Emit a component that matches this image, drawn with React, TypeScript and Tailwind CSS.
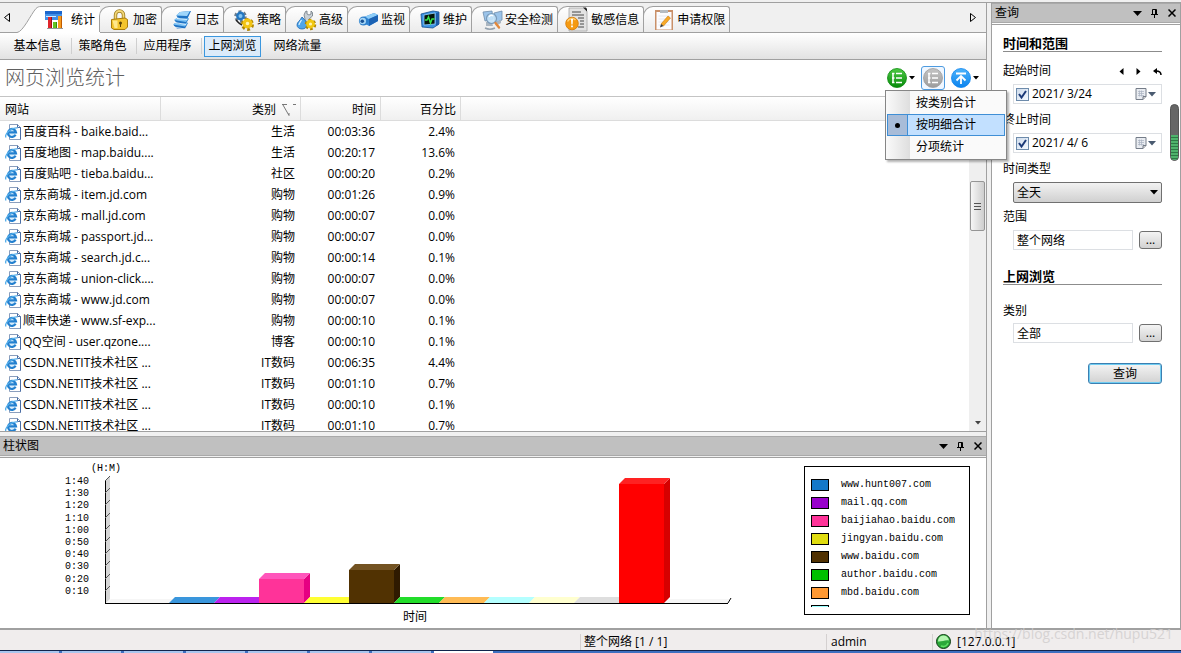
import { useState } from "react"
import type { ReactNode } from "react"
import clsx from "clsx"

const rows = [
  ["百度百科 - baike.baid...", "生活", "00:03:36", "2.4%"],
  ["百度地图 - map.baidu....", "生活", "00:20:17", "13.6%"],
  ["百度贴吧 - tieba.baidu...", "社区", "00:00:20", "0.2%"],
  ["京东商城 - item.jd.com", "购物", "00:01:26", "0.9%"],
  ["京东商城 - mall.jd.com", "购物", "00:00:07", "0.0%"],
  ["京东商城 - passport.jd...", "购物", "00:00:07", "0.0%"],
  ["京东商城 - search.jd.c...", "购物", "00:00:14", "0.1%"],
  ["京东商城 - union-click....", "购物", "00:00:07", "0.0%"],
  ["京东商城 - www.jd.com", "购物", "00:00:07", "0.0%"],
  ["顺丰快递 - www.sf-exp...", "购物", "00:00:10", "0.1%"],
  ["QQ空间 - user.qzone....", "博客", "00:00:10", "0.1%"],
  ["CSDN.NETIT技术社区 ...", "IT数码", "00:06:35", "4.4%"],
  ["CSDN.NETIT技术社区 ...", "IT数码", "00:01:10", "0.7%"],
  ["CSDN.NETIT技术社区 ...", "IT数码", "00:00:10", "0.1%"],
  ["CSDN.NETIT技术社区 ...", "IT数码", "00:01:10", "0.7%"],
]

const legend = [
  { name: "www.hunt007.com", color: "bg-[#1478c8]" },
  { name: "mail.qq.com", color: "bg-[#9900cc]" },
  { name: "baijiahao.baidu.com", color: "bg-[#ff3399]" },
  { name: "jingyan.baidu.com", color: "bg-[#e0dc10]" },
  { name: "www.baidu.com", color: "bg-[#513202]" },
  { name: "author.baidu.com", color: "bg-[#00c000]" },
  { name: "mbd.baidu.com", color: "bg-[#ff9933]" },
  { name: "", color: "bg-[#99ffff]" },
]

// h is the height of the front face, 0 means only the top face is visible
const bars = [
  { h: 0, front: "#1478c8", top: "#3a96dc", side: "#0c5a9a" },
  { h: 0, front: "#9900cc", top: "#bb22ee", side: "#770099" },
  { h: 24, front: "#ff3399", top: "#ff55bb", side: "#e60082" },
  { h: 0, front: "#e0dc10", top: "#ffff33", side: "#b0ac00" },
  { h: 33, front: "#513202", top: "#735322", side: "#2f1a00" },
  { h: 0, front: "#00c000", top: "#22dd2a", side: "#009000" },
  { h: 0, front: "#ff9933", top: "#ffbb55", side: "#dd7711" },
  { h: 0, front: "#99ffff", top: "#b4ffff", side: "#77dddd" },
  { h: 0, front: "#ffffcc", top: "#ffffcf", side: "#dddd99" },
  { h: 0, front: "#c0c0c0", top: "#dedede", side: "#a0a0a0" },
  { h: 119, front: "#ff0000", top: "#ff2222", side: "#d60000" },
]

const ticks = ["1:40", "1:30", "1:20", "1:10", "1:00", "0:50", "0:40", "0:30", "0:20", "0:10"]

/* ---------- icons ---------- */

function Svg({ children }: { children: ReactNode }) {
  return (
    <svg className="size-5 shrink-0 overflow-visible" viewBox="0 0 20 20" aria-hidden="true">
      {children}
    </svg>
  )
}

const StatIcon = () => (
  <Svg>
    <path d="M1 1h17v9H1z" fill="#3f8fe8" />
    <path d="M1 1h17v3H1z" fill="#1c66cc" />
    <path d="M2 6h10v1H2z" fill="#d4eaff" />
    <path d="M4 7h4v11H4z" fill="#e0252b" />
    <path d="M7 7h1v11H7z" fill="#a00d14" />
    <path d="M9 12h4v6H9z" fill="#62c422" />
    <path d="M12 12h1v6h-1z" fill="#3a8a0c" />
    <path d="M14 6h4v12h-4z" fill="#f79a1e" />
    <path d="M17 6h1v12h-1z" fill="#c05c00" />
    <path d="M3 18h16v1H3z" fill="#999" />
  </Svg>
)

const LockIcon = () => (
  <Svg>
    <path d="M5.500 10V5a4 4 0 0 1 8 0v5" fill="none" stroke="#9a7a1c" strokeWidth="3.400" />
    <path d="M5.500 10V5a4 4 0 0 1 8 0v5" fill="none" stroke="#f4d879" strokeWidth="1.800" />
    <path d="M1.500 9.500 15 8l2.500 1.500V17L15 19.500H4L1.500 18z" fill="#f3c42c" stroke="#a97c0c" />
    <path d="M2.500 10.500h5V18h-3z" fill="#ffe88c" />
    <circle cx="10.500" cy="13" r="1.500" fill="#5f4505" />
    <path d="M10 13h1v4h-1z" fill="#5f4505" />
  </Svg>
)

const LogIcon = () => (
  <Svg>
    <path d="m1 15 4-3.500 11 1.500-3 5.500H5z" fill="#1f73c4" />
    <path d="m1 14.500 4-3 11 1-3 4z" fill="#7cc2f4" />
    <path d="m2 10.500 4-3.500 11 1.500-3 5H6z" fill="#1f73c4" />
    <path d="m2 10 4-3 11 1-3 4z" fill="#7cc2f4" />
    <path d="m4 6 4-4 11-1-3.500 7.500H8z" fill="#1f73c4" />
    <path d="m4 5.500 4-3.500 10-1-3 5z" fill="#9fd6fb" />
    <path d="m1 14.500 1 2.500 11 2M2 10l1 2.500 11 2M4 5.500l1 3 10 1" fill="none" stroke="#fff" strokeWidth=".7" />
  </Svg>
)

const PolicyIcon = () => (
  <Svg>
    <circle cx="6.500" cy="6.500" r="3.800" fill="none" stroke="#6b7d8e" strokeWidth="5" strokeDasharray="2.200 1.780" />
    <circle cx="6.500" cy="6" r="3.200" fill="#84c4f0" stroke="#2477c0" strokeWidth="2.400" />
    <path d="M2 10c2 2 3 4 6 5" fill="none" stroke="#222" strokeWidth="1.500" />
    <circle cx="13.500" cy="14.500" r="4" fill="none" stroke="#b08600" strokeWidth="5" strokeDasharray="2.200 1.990" />
    <circle cx="13.500" cy="13.500" r="3.400" fill="#fff3b0" stroke="#f2c414" strokeWidth="3.200" />
  </Svg>
)

const AdvancedIcon = () => (
  <Svg>
    <path d="M9 9 8 5l1.500-3.500 1.500-.500v3l2 1 2-1V1l1.500 1.500V6L13 9v4H9z" fill="#c9d0d6" stroke="#6d7780" strokeWidth=".8" />
    <path d="M6 7c3 3 5 5 5 8a5 4 0 0 1-10 0c0-3 3-4 5-8z" fill="#4ea5ea" stroke="#1a65b3" strokeWidth=".8" />
    <path d="M5.500 10c-1 2-2.500 3-2.500 5" fill="none" stroke="#d9f0ff" strokeWidth="1.200" />
    <circle cx="14.500" cy="14.500" r="3.500" fill="none" stroke="#b08600" strokeWidth="4.500" strokeDasharray="2 1.660" />
    <circle cx="14.500" cy="14" r="3" fill="#fff3b0" stroke="#f2c80f" strokeWidth="2.800" />
  </Svg>
)

const MonitorIcon = () => (
  <Svg>
    <path d="m6 7 10-4 4 2v6l-9 5-5-3z" fill="#2f86d6" />
    <path d="m6 7 10-4 4 2-9 4z" fill="#8ecdf8" />
    <path d="m11 9 9-4v6l-9 5z" fill="#1b62b4" />
    <circle cx="5.500" cy="11" r="4.600" fill="#2e7fcb" />
    <circle cx="4.800" cy="11" r="3.200" fill="#a7d7f6" />
    <circle cx="4.300" cy="11.300" r="1.800" fill="#185195" />
  </Svg>
)

const MaintainIcon = () => (
  <Svg>
    <path d="m1 4 12-3 6 1v12l-6 4-11-1z" fill="#3b93e4" stroke="#174f8f" strokeWidth=".8" />
    <path d="M16 3v13l3-1.500V2z" fill="#1d5ca8" />
    <path d="m4 5 11-2v11L4 15z" fill="#04160a" stroke="#9cd2fb" strokeWidth=".8" />
    <path d="M5 10h2l1.500-3 2 6L12 9h2.500" fill="none" stroke="#37e24a" strokeWidth="1.500" />
  </Svg>
)

const SecurityIcon = () => (
  <Svg>
    <path d="m1 2 9-1 1 8-8 2zM12 3l8-2v9l-7 3z" fill="#9bc4ea" stroke="#6e8dab" strokeWidth=".8" />
    <path d="M4 12h6l1 4H4zM13 12l6-2v3l-5 3z" fill="#a9b5c0" />
    <circle cx="9.500" cy="8.500" r="5" fill="#c4e3f9" fillOpacity=".9" stroke="#7a9ab8" strokeWidth="1.200" />
    <path d="M7 7c1-2 3-2 4-1" fill="none" stroke="#fff" strokeWidth="1.200" />
    <path d="m13.500 13 3.500 4.500" stroke="#e2893d" strokeWidth="2.400" strokeLinecap="round" />
    <path d="M3 18c3 1.500 7 1.500 10 0" fill="none" stroke="#93a1ae" strokeWidth="1.500" />
  </Svg>
)

const SensitiveIcon = () => (
  <Svg>
    <path d="M1-2h15l3 3v20H1z" fill="#e3e3e3" stroke="#a6a6a6" strokeWidth=".8" />
    <path d="M15-2.500 19 1.500V-1l-1-1.500z" fill="#222" />
    <path d="M4 2h9M4 5h12M10 8h6M12 11h4M12 14h4M10 17h6" stroke="#7d7d7d" strokeWidth="1.500" />
    <circle cx="4" cy="13.500" r="6.300" fill="#f59a12" stroke="#d57700" strokeWidth=".8" />
    <path d="M-.500 11.500a5 5 0 0 1 8-1.500" fill="none" stroke="#ffd27a" strokeWidth="1.500" />
    <path d="M3 9h2l-.400 5.500H3.400zM3.100 15.500h1.800v1.800H3.100z" fill="#fff" />
  </Svg>
)

const ApplyIcon = () => (
  <Svg>
    <path d="M1 0h18v20H1z" fill="#c99069" />
    <path d="M2.500 2h15v17.500h-15z" fill="#fcfcff" />
    <path d="M6 0h8v3H6z" fill="#b6bcc2" />
    <path d="M4.500 6h11M4.500 9h11M4.500 12h11M4.500 15h11" stroke="#dfe3ea" strokeWidth=".8" />
    <path d="m7 14 7-8 2.500 2-7 8z" fill="#f9a927" stroke="#c77b0d" strokeWidth=".6" />
    <path d="m7 14-1 3.500 3.500-1.500z" fill="#3c3c3c" />
  </Svg>
)

function IeIcon() {
  return (
    <svg className="size-4 shrink-0" viewBox="0 0 16 16" aria-hidden="true">
      <path d="M4.500.5h8l3 3v12h-11z" fill="#fff" stroke="#8a9ebd" />
      <path d="M12.500.5v3h3v12" fill="none" stroke="#4a6da5" />
      <circle cx="7" cy="8.500" r="4" fill="#d7ecfb" />
      <path d="M10.600 10.800A4 4 0 1 1 11 8.400H4" fill="none" stroke="#2380cf" strokeWidth="2.200" />
      <path d="M1 13.500C-1 10 7 3 12.500 4" fill="none" stroke="#54aeea" strokeWidth="1.300" />
    </svg>
  )
}

function RoundIcon({ kind }: { kind: "green" | "gray" | "blue" }) {
  const light = { green: "#4cc943", gray: "#c4c4c4", blue: "#4db4fb" }[kind]
  const dark = { green: "#078a0b", gray: "#9c9c9c", blue: "#0b83ee" }[kind]
  return (
    <svg className="size-5" viewBox="0 0 20 20" aria-hidden="true">
      <defs>
        <linearGradient id={`round-${kind}`} x2="0" y2="1">
          <stop offset="0" stopColor={light} />
          <stop offset="1" stopColor={dark} />
        </linearGradient>
      </defs>
      <circle cx="10" cy="10" r="9.500" fill={`url(#round-${kind})`} stroke={dark} strokeWidth=".8" />
      {kind === "blue" ? (
        <path d="M5 5.500h10M10 16V8M5.500 12.500 10 8l4.500 4.500" fill="none" stroke="#fff" strokeWidth="1.800" />
      ) : (
        <path d="M6 5.500v9M9 5.500h6M9 10h6M9 14.500h6M5 5.500h2.500M5 10h2.500M5 14.500h2.500" fill="none" stroke="#fff" strokeWidth="1.500" />
      )}
    </svg>
  )
}

function SmallArrow() {
  return (
    <svg className="h-1 w-[6px] shrink-0" viewBox="0 0 6 4" aria-hidden="true">
      <path d="M0 0h6L3 3.500z" fill="currentColor" />
    </svg>
  )
}

function PanelTitle({ title }: { title: string }) {
  return (
    <div className="flex h-5 shrink-0 items-center border-y border-[#a9a9a9] bg-[#c0c0c0] pl-[3px]">
      <h2 className="flex-1">{title}</h2>
      <div className="flex items-center">
        <button type="button" aria-label="菜单" className="flex w-[17px] justify-center">
          <svg className="h-[5px] w-[9px]" viewBox="0 0 9 5"><path d="M0 0h9L4.500 5z" /></svg>
        </button>
        <button type="button" aria-label="固定" className="flex w-[17px] justify-center">
          <svg className="h-[9px] w-[7px]" viewBox="0 0 7 9">
            <path d="M1.500 5V.5h4V5M4.500 1v4M0 5.500h7M3.500 6v3" fill="none" stroke="#000" />
          </svg>
        </button>
        <button type="button" aria-label="关闭" className="flex w-[17px] justify-center">
          <svg className="size-2" viewBox="0 0 8 8"><path d="m.5.5 7 7m0-7-7 7" stroke="#000" strokeWidth="1.500" /></svg>
        </button>
      </div>
    </div>
  )
}

/* ---------- left side ---------- */

const tabs = [
  { name: "加密", icon: <LockIcon /> },
  { name: "日志", icon: <LogIcon /> },
  { name: "策略", icon: <PolicyIcon /> },
  { name: "高级", icon: <AdvancedIcon /> },
  { name: "监视", icon: <MonitorIcon /> },
  { name: "维护", icon: <MaintainIcon /> },
  { name: "安全检测", icon: <SecurityIcon /> },
  { name: "敏感信息", icon: <SensitiveIcon /> },
  { name: "申请权限", icon: <ApplyIcon /> },
]

function MainTabs() {
  return (
    <nav className="flex h-[30px] shrink-0 items-end border-b border-[#a0a0a0] bg-[#f0f0f0]">
      <button type="button" aria-label="向左" className="flex h-full w-[17px] items-center pl-1">
        <svg className="h-[9px] w-[6px]" viewBox="0 0 6 9"><path d="M5.500.5v8l-5-4z" fill="none" stroke="#000" /></svg>
      </button>
      <button type="button" className="-mb-px flex h-[27px]">
        <svg className="h-[27px] w-6" viewBox="0 0 24 27" aria-hidden="true">
          <path d="M0 26.500C6 26 14 8 19 2.500 20.500 1 22 .5 24 .5V27H0z" fill="#fff" />
          <path d="M0 26.500C6 26 14 8 19 2.500 20.500 1 22 .5 24 .5" fill="none" stroke="#a0a0a0" />
        </svg>
        <span className="flex h-full items-center gap-[7px] border-t border-[#a0a0a0] bg-white pr-[5px] pl-[3px]">
          <StatIcon />
          统计
        </span>
      </button>
      {tabs.map((tab) => (
        <button
          key={tab.name}
          type="button"
          className="-ml-px flex h-[26px] items-center gap-[3px] rounded-tl-[10px] rounded-tr-[3px] border border-b-0 border-[#a0a0a0] bg-linear-to-b from-white to-[#ebebeb] pr-1 pl-[10px]"
        >
          {tab.icon}
          {tab.name}
        </button>
      ))}
      <button type="button" aria-label="向右" className="ml-auto flex h-full items-center pr-[10px]">
        <svg className="h-[9px] w-[6px]" viewBox="0 0 6 9"><path d="M.5.5v8l5-4z" fill="none" stroke="#000" /></svg>
      </button>
    </nav>
  )
}

const subTabs = ["基本信息", "策略角色", "应用程序", "上网浏览", "网络流量"]

function SubTabs() {
  const [active, setActive] = useState("上网浏览")
  return (
    <nav className="flex h-[27px] shrink-0 items-center border-b border-[#a0a0a0] bg-linear-to-b from-white to-[#e2e2e2] pl-[9px]">
      {subTabs.map((name, i) => (
        <div key={name} className="flex items-center">
          <button
            type="button"
            onClick={() => setActive(name)}
            className={clsx(
              "h-[21px] w-[57px] border",
              name === active ? "border-[#3b97de] bg-[#dcebfa]" : "border-transparent",
            )}
          >
            {name}
          </button>
          {i < subTabs.length - 1 && (
            <span
              className={clsx(
                "mr-[2px] ml-[5px] h-4 w-px",
                name === active ? "bg-transparent" : "bg-[#cfcfcf]",
              )}
            />
          )}
        </div>
      ))}
    </nav>
  )
}

const menuItems = ["按类别合计", "按明细合计", "分项统计"]

function TitleRow() {
  const [mode, setMode] = useState("按明细合计")
  return (
    <div className="flex h-[37px] shrink-0 items-center justify-between border-b border-[#c4c4c4] pr-[7px] pl-[5px]">
      <h1 className="text-[20px] leading-6 font-light text-[#606060]">网页浏览统计</h1>
      <div className="relative flex items-center">
        <button type="button" aria-label="合计方式" className="flex items-center gap-[2px]">
          <RoundIcon kind="green" />
          <SmallArrow />
        </button>
        <button
          type="button"
          aria-label="明细"
          className="mx-[6px] flex size-6 items-center justify-center rounded-[3px] border border-[#4d9be0] bg-[#f0f7ff]"
        >
          <RoundIcon kind="gray" />
        </button>
        <button type="button" aria-label="导出" className="flex items-center gap-[2px]">
          <RoundIcon kind="blue" />
          <SmallArrow />
        </button>

        <ul
          role="menu"
          className="absolute top-full -left-[2px] z-10 w-[122px] border border-[#868686] bg-linear-to-r from-[#fafafa] from-0% via-[#dedede] via-[24px] to-[#fafafa] to-[24px] p-px shadow-[2px_2px_2px_rgba(0,0,0,0.3)]"
        >
          {menuItems.map((item) => (
            <li key={item} role="none">
              <button
                type="button"
                role="menuitemradio"
                aria-checked={item === mode}
                onClick={() => setMode(item)}
                className={clsx(
                  "flex h-[22px] w-full items-center border",
                  item === mode ? "border-[#3f8fd6] bg-[#c2e0ff]" : "border-transparent",
                )}
              >
                <span
                  className={clsx(
                    "flex h-full w-5 items-center justify-center",
                    item === mode && "border-r border-[#3f8fd6] bg-[#a8bcd8]",
                  )}
                >
                  {item === mode && <span className="size-[5px] rounded-full bg-black" />}
                </span>
                <span className="pl-2">{item}</span>
              </button>
            </li>
          ))}
        </ul>
      </div>
    </div>
  )
}

function SiteTable() {
  return (
    <div className="flex min-h-0 flex-1 overflow-hidden">
      <div className="min-w-0 flex-1 overflow-hidden">
        <table className="w-full table-fixed border-separate border-spacing-0">
          <thead>
            <tr className="h-6 bg-linear-to-b from-white to-[#efefef]">
              <th className="w-[161px] border-r border-b border-[#dcdcdc] p-0 pt-[2px] pl-[5px] text-left font-normal">网站</th>
              <th className="w-[140px] border-r border-b border-[#dcdcdc] p-0 pt-[2px] pr-1 text-right font-normal">
                <span className="flex items-center justify-end gap-[6px]">
                  类别
                  <svg className="h-3 w-[14px]" viewBox="0 0 14 12" aria-hidden="true">
                    <path d="M0 .5h5M1 1l6 10.500V9M11 .5h3" fill="none" stroke="#777" />
                  </svg>
                </span>
              </th>
              <th className="w-[80px] border-r border-b border-[#dcdcdc] p-0 pt-[2px] pr-1 text-right font-normal">时间</th>
              <th className="w-[80px] border-r border-b border-[#dcdcdc] p-0 pt-[2px] pr-1 text-right font-normal">百分比</th>
              <th className="border-b border-[#dcdcdc]" />
            </tr>
          </thead>
          <tbody>
            {rows.map(([site, type, time, percent], i) => (
              <tr key={i} className="h-[21px]">
                <td className="p-0 pl-[5px] whitespace-nowrap">
                  <div className="flex items-center gap-[2px]">
                    <IeIcon />
                    {site}
                  </div>
                </td>
                <td className="p-0 pr-[6px] text-right">{type}</td>
                <td className="p-0 pr-[6px] text-right">{time}</td>
                <td className="p-0 pr-[6px] text-right">{percent}</td>
                <td />
              </tr>
            ))}
          </tbody>
        </table>
      </div>
      {/* Scrollbar */}
      <div className="flex w-[17px] flex-col items-center bg-[#efefef] pt-[84px] pb-[6px]">
        <div className="flex h-[50px] w-[15px] items-center justify-center rounded-[2px] border border-[#959595] bg-linear-to-r from-[#f6f6f6] to-[#cecece]">
          <svg className="h-[7px] w-[7px]" viewBox="0 0 7 7"><path d="M0 .5h7M0 3.500h7M0 6.500h7" stroke="#555" /></svg>
        </div>
        <span className="mt-auto text-[#444]"><SmallArrow /></span>
      </div>
    </div>
  )
}

function BarChart() {
  const base = 145
  return (
    <svg className="h-[170px] w-[740px] shrink-0" viewBox="0 0 740 170" role="img" aria-label="柱状图">
      <path d="M106 22l4-4v123l-4 4z" fill="#d6d6d6" />
      <path d="M106 145l5-4h620l-3 4z" fill="#f6f6f6" />
      {bars.map((bar, i) => {
        const x = 169 + i * 45
        const top = base - bar.h
        return (
          <g key={i}>
            {bar.h > 0 && <path d={`M${x} ${top}h45v${bar.h}h-45z`} fill={bar.front} />}
            {bar.h > 0 && <path d={`M${x + 45} ${top}l6-6v${bar.h}l-6 6z`} fill={bar.side} />}
            <path d={`M${x} ${top}l6-6h45l-6 6z`} fill={bar.top} />
          </g>
        )
      })}
      <path d="M105.500 22v124M105 145.500h623M728 145l3-5" fill="none" stroke="#000" />
      <g fontFamily="'Liberation Mono', monospace" fontSize="10">
        <text x="91" y="13">(H:M)</text>
        {ticks.map((tick, i) => (
          <text key={tick} x="65" y={26 + Math.round(i * 12.2)}>{tick}</text>
        ))}
      </g>
      {ticks.map((tick, i) => (
        <path key={tick} d={`M105 ${23 + Math.round(i * 12.2)}l5-5`} stroke="#555" />
      ))}
      <text x="403" y="163">时间</text>
    </svg>
  )
}

function ChartPanel() {
  return (
    <section className="shrink-0">
      <PanelTitle title="柱状图" />
      <div className="mt-px flex items-start justify-between overflow-hidden border-t border-[#a0a0a0] bg-white pr-4">
        <BarChart />
        <div className="mt-2 h-[149px] w-[166px] shrink-0 border border-black px-[6px] pt-[9px]">
          <ul className="h-[131px] overflow-hidden">
            {legend.map((item) => (
              <li key={item.color} className="flex h-[18px] items-center gap-[12px]">
                <span className={clsx("h-3 w-[18px] border border-black", item.color)} />
                <span className="font-['Liberation_Mono',monospace] text-[10px]">{item.name}</span>
              </li>
            ))}
          </ul>
        </div>
      </div>
    </section>
  )
}

/* ---------- query panel ---------- */

function DateField({ id, label, value }: { id: string; label: string; value: string }) {
  const [checked, setChecked] = useState(true)
  return (
    <div className="flex h-5 items-center border border-[#dcdfe3] bg-white pr-[5px] pl-[2px]">
      <span className="relative flex">
        <input
          type="checkbox"
          aria-label={label}
          checked={checked}
          onChange={(e) => setChecked(e.target.checked)}
          className="size-[13px] appearance-none border border-[#6d8bab] bg-linear-to-br from-[#cfdcec] to-[#f4f9ff]"
        />
        {checked && (
          <svg className="pointer-events-none absolute inset-0 size-[13px]" viewBox="0 0 13 13">
            <path d="M3 6l2.500 3.500L10 3" fill="none" stroke="#1c3a78" strokeWidth="2" />
          </svg>
        )}
      </span>
      <input id={id} type="text" defaultValue={value} className="w-0 min-w-0 flex-1 bg-transparent pl-[3px] outline-none" />
      <button type="button" aria-label="选择日期" className="flex items-center gap-px text-[#4a5a70]">
        <svg className="size-3" viewBox="0 0 12 12">
          <path d="M1 .5h10v8l-3 3H1z" fill="#e9ecf1" stroke="#747c88" />
          <path d="M3 3.500h6M3 5.500h6M3 7.500h6M4.500 2.500v6M6.500 2.500v6" stroke="#a9b2c0" strokeWidth=".7" />
          <path d="M11 8.500H8v3" fill="#ccc" stroke="#747c88" />
        </svg>
        <svg className="h-[5px] w-2" viewBox="0 0 8 5"><path d="M0 0h8L4 4.500z" fill="currentColor" /></svg>
      </button>
    </div>
  )
}

function PickField({ id, value }: { id: string; value: string }) {
  return (
    <div className="flex items-center gap-[6px]">
      <input
        id={id}
        type="text"
        defaultValue={value}
        className="h-5 w-0 min-w-0 flex-1 border border-[#dcdfe3] bg-white pl-[3px] outline-none"
      />
      <button
        type="button"
        aria-label="选择"
        className="h-[18px] w-[23px] rounded-[3px] border border-[#707070] bg-linear-to-b from-[#f4f4f4] to-[#d2d2d2] leading-3"
      >
        ...
      </button>
    </div>
  )
}

function QueryPanel() {
  return (
    <aside className="relative flex w-[190px] shrink-0 flex-col border-x border-[#a0a0a0] bg-white">
      <PanelTitle title="查询" />
      <form
        className="mt-px flex flex-col border-t border-[#a0a0a0] pt-[10px] pr-[18px] pl-[11px]"
        onSubmit={(e) => e.preventDefault()}
      >
        <h3 className="border-b border-[#8c8c8c] text-[13px] leading-4 font-bold">时间和范围</h3>

        <div className="mt-[11px] flex items-center justify-between">
          <label htmlFor="start">起始时间</label>
          <div className="flex items-center gap-3">
            <button type="button" aria-label="前一天">
              <svg className="h-[7px] w-[5px]" viewBox="0 0 5 7"><path d="M4.500 0v7L.5 3.500z" /></svg>
            </button>
            <button type="button" aria-label="后一天">
              <svg className="h-[7px] w-[5px]" viewBox="0 0 5 7"><path d="M.5 0v7l4-3.500z" /></svg>
            </button>
            <button type="button" aria-label="重置">
              <svg className="h-[7px] w-[9px]" viewBox="0 0 9 7">
                <path d="M4 0v6L0 3z" />
                <path d="M3 3c3 0 5 1 5 4" fill="none" stroke="#000" strokeWidth="1.500" />
              </svg>
            </button>
          </div>
        </div>
        <div className="mt-[5px] pl-[10px]">
          <DateField id="start" label="启用起始时间" value="2021/ 3/24" />
        </div>

        <label htmlFor="end" className="mt-2">终止时间</label>
        <div className="mt-[5px] pl-[10px]">
          <DateField id="end" label="启用终止时间" value="2021/ 4/ 6" />
        </div>

        <label htmlFor="timeType" className="mt-2">时间类型</label>
        <div className="relative mt-[5px] ml-[10px]">
          <select
            id="timeType"
            className="block h-[21px] w-full appearance-none rounded-[2px] border border-[#707070] bg-linear-to-b from-[#f2f2f2] to-[#d0d0d0] pl-[3px]"
          >
            <option>全天</option>
          </select>
          <svg className="pointer-events-none absolute top-2 right-1 h-[5px] w-2" viewBox="0 0 8 5">
            <path d="M0 0h8L4 4.500z" />
          </svg>
        </div>

        <label htmlFor="range" className="mt-[6px]">范围</label>
        <div className="mt-[5px] pl-[10px]">
          <PickField id="range" value="整个网络" />
        </div>

        <h3 className="mt-[18px] border-b border-[#8c8c8c] text-[13px] leading-4 font-bold">上网浏览</h3>

        <label htmlFor="type" className="mt-[18px]">类别</label>
        <div className="mt-1 pl-[10px]">
          <PickField id="type" value="全部" />
        </div>

        <button
          type="submit"
          className="mt-5 h-[21px] w-[74px] self-end rounded-[3px] border border-[#3c7fb1] bg-linear-to-b from-[#f4f4f4] to-[#d2d2d2] inset-ring inset-ring-[#6fcdf2]"
        >
          查询
        </button>
      </form>

      {/* Level gauge on the panel edge */}
      <div className="absolute top-[101px] right-px flex h-[57px] w-[9px] flex-col overflow-hidden rounded-full border border-[#555] bg-[#666]">
        <div className="mt-auto h-[25px] bg-[repeating-linear-gradient(#4fb36c_0_2px,#2d7a45_2px_3px)]" />
      </div>
    </aside>
  )
}

function StatusBar() {
  return (
    <footer className="relative flex h-[22px] shrink-0 items-center border-t-2 border-[#a0a0a0] bg-[#f0eded] pt-[3px]">
      <div className="flex-1" />
      <div className="w-[246px] border-l border-[#d4d0d0] pl-[3px]">整个网络 [1 / 1]</div>
      <div className="w-[106px] border-l border-[#d4d0d0] pl-1">admin</div>
      <div className="flex w-[249px] items-center gap-[6px] border-l border-[#d4d0d0] pl-[3px]">
        <svg className="size-[15px]" viewBox="0 0 15 15" aria-hidden="true">
          <circle cx="7.500" cy="7.500" r="7" fill="#2aa838" stroke="#123d16" />
          <path d="M2 7.500a5.500 5.500 0 0 1 11-1C9 5.500 6 8 2 7.500z" fill="#b4f5b0" />
          <path d="M5 12c3 1 6 0 7-3" fill="none" stroke="#5fe065" strokeWidth="1.500" />
        </svg>
        [127.0.0.1]
      </div>
      <span className="pointer-events-none absolute -top-1 right-2 text-sm leading-4 text-[#cfcccc]/80">
        https://blog.csdn.net/hupu521
      </span>
    </footer>
  )
}

function TaskBar() {
  return (
    <div className="flex h-[3px] shrink-0 gap-[3px] border-t border-[#10244c] bg-[#3d6fc0]">
      {Array.from({ length: 8 }, (_, i) => (
        <span key={i} className={clsx("w-[59px]", i === 7 ? "bg-white" : "bg-[#a9c6ee]")} />
      ))}
    </div>
  )
}

export default function App() {
  return (
    <div
      lang="zh-CN"
      className="flex h-screen flex-col overflow-hidden bg-[#f0f0f0] font-['Open_Sans','Noto_Sans_CJK_SC',sans-serif] text-[12px] leading-4 text-black"
    >
      <div className="h-[3px] shrink-0 border-b border-[#a0a0a0]" />
      <div className="flex min-h-0 flex-1 gap-1">
        <main className="flex min-w-0 flex-1 flex-col border-r border-[#a0a0a0]">
          <div className="flex min-h-0 flex-1 flex-col border-b border-[#a0a0a0] bg-white">
            <MainTabs />
            <SubTabs />
            <TitleRow />
            <SiteTable />
          </div>
          <div className="h-1 shrink-0" />
          <ChartPanel />
        </main>
        <QueryPanel />
      </div>
      <StatusBar />
      <TaskBar />
    </div>
  )
}
